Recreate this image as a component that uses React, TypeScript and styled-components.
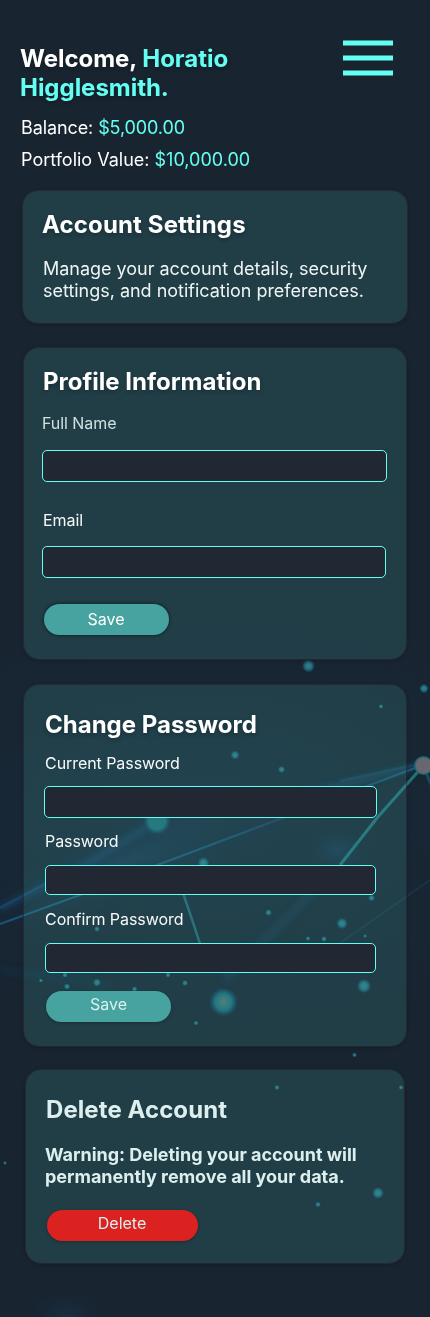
import React from 'react';
import styled, { createGlobalStyle } from 'styled-components';

const GlobalStyle = createGlobalStyle`
  *, *::before, *::after { box-sizing: border-box; }
  body { margin: 0; background: #182430; }
`;

const Page = styled.main`
  position: relative;
  width: 430px;
  height: 1317px;
  overflow: hidden;
  background: #182430;
  color: #fff;
  font-family: Inter, 'Liberation Sans', sans-serif;
`;

const Backdrop = styled.svg`
  position: absolute;
  inset: 0;
  pointer-events: none;
`;

const Content = styled.div`
  position: relative;
  display: flex;
  flex-direction: column;
`;

const Header = styled.header`
  display: flex;
  justify-content: space-between;
  align-items: flex-start;
  height: 191px;
  padding: 40px 37px 0 20px;
`;

const Greeting = styled.div`
  width: 260px;
  padding-top: 4px;
`;

const Welcome = styled.h1`
  margin: 0 0 15px;
  font-size: 24px;
  font-weight: 700;
  line-height: 29px;
  letter-spacing: -0.03px;
  text-shadow: 0 2px 4px rgba(0, 0, 0, 0.25);
`;

const Accent = styled.span`
  color: #64fff3;
`;

const Stat = styled.p<{ $tracking?: number }>`
  margin: 0 0 10px 1px;
  font-size: 18px;
  font-weight: 400;
  line-height: 22px;
  letter-spacing: ${(p) => p.$tracking ?? 0}px;
`;

const MenuButton = styled.button`
  display: block;
  padding: 0;
  border: 0;
  background: none;
`;

const Card = styled.section<{ $left: number; $width: number; $height: number; $gap?: number; $top: number }>`
  display: flex;
  flex-direction: column;
  align-items: flex-start;
  width: ${(p) => p.$width}px;
  height: ${(p) => p.$height}px;
  margin: ${(p) => p.$gap ?? 0}px 0 0 ${(p) => p.$left}px;
  padding-top: ${(p) => p.$top}px;
  border-radius: 15px;
  background: rgba(70, 163, 160, 0.2);
  box-shadow: 0 0 0 1px rgba(47, 46, 58, 0.6), 0 1px 4px rgba(0, 0, 0, 0.3);
`;

const Title = styled.h2<{ $indent: number; $soft?: boolean; $tracking?: number }>`
  margin: 0 0 0 ${(p) => p.$indent}px;
  font-size: 24px;
  font-weight: 700;
  line-height: 29px;
  letter-spacing: ${(p) => p.$tracking ?? 0}px;
  color: ${(p) => (p.$soft ? '#dcefee' : '#fff')};
  text-shadow: ${(p) => (p.$soft ? 'none' : '0 2px 4px rgba(0, 0, 0, 0.25)')};
`;

const Copy = styled.p<{ $indent: number; $strong?: boolean }>`
  width: 335px;
  margin: ${(p) => (p.$strong ? 20 : 19)}px 0 0 ${(p) => p.$indent}px;
  font-size: 18px;
  font-weight: ${(p) => (p.$strong ? 700 : 400)};
  line-height: 22px;
  letter-spacing: -0.02px;
  color: ${(p) => (p.$strong ? '#dcefee' : '#eff5f5')};
`;

const Label = styled.label<{ $indent: number; $gap: number; $soft?: boolean }>`
  margin: ${(p) => p.$gap}px 0 0 ${(p) => p.$indent}px;
  font-size: 16px;
  font-weight: 400;
  line-height: 19px;
  letter-spacing: -0.06px;
  color: ${(p) => (p.$soft ? '#cfe0e1' : '#f7fafa')};
`;

const Input = styled.input<{ $indent: number; $width: number; $height: number; $gap: number }>`
  flex: none;
  width: ${(p) => p.$width}px;
  height: ${(p) => p.$height}px;
  margin: ${(p) => p.$gap}px 0 0 ${(p) => p.$indent}px;
  padding: 0 10px;
  border: 1px solid #64fff3;
  border-radius: 5px;
  outline: 0;
  background: #222833;
  color: #fff;
  font: 400 16px Inter, sans-serif;
`;

const Button = styled.button<{ $indent: number; $gap: number; $textTop: number; $danger?: boolean; $soft?: boolean }>`
  flex: none;
  width: ${(p) => (p.$danger ? 151 : 125)}px;
  height: 31px;
  margin: ${(p) => p.$gap}px 0 0 ${(p) => p.$indent}px;
  padding: ${(p) => p.$textTop}px ${(p) => (p.$soft && !p.$danger ? 0 : 1)}px 0 0;
  display: flex;
  justify-content: center;
  align-items: flex-start;
  border: 0;
  border-radius: 16px;
  background: ${(p) => (p.$danger ? '#dc2121' : '#46a3a0')};
  color: ${(p) => (p.$soft ? '#daf0ef' : '#fff')};
  box-shadow: ${(p) => (p.$soft ? '0 1px 3px rgba(0, 0, 0, 0.25)' : '0 0 3px 1px rgba(20, 24, 34, 0.65)')};
  font-family: inherit;
  font-size: 16px;
  font-weight: 400;
  line-height: 19px;
`;

const dots: Array<[number, number, number]> = [
  [308.5, 666, 5.5], [424, 688.5, 4], [381, 706.5, 2], [235, 755, 3.8], [281.5, 769.5, 3],
  [203.5, 863, 5], [268.5, 912.5, 2.8], [371.5, 898, 2.8], [342, 923.5, 4.8], [308, 938.5, 2],
  [324, 939, 2.4], [365, 936, 1.6], [97, 929, 2.4], [41, 980.5, 1.8], [65, 975, 2.3],
  [67, 986.5, 2.6], [97, 982.5, 3.4], [134.5, 989, 2.3], [168, 975, 2.2], [185, 983, 2.5],
  [196, 1023, 2], [364, 986, 6], [354.5, 1055, 2], [277, 1087.5, 2.2], [401, 1087.5, 2],
  [5, 1163, 1.6], [378, 1193, 5], [318, 1204.5, 2.4],
];

const Network = () => (
  <Backdrop width="430" height="1317" viewBox="0 0 430 1317" aria-hidden="true">
    <defs>
      <radialGradient id="dot">
        <stop offset="0" stopColor="#388084" />
        <stop offset="0.5" stopColor="#22707e" />
        <stop offset="0.8" stopColor="#185974" stopOpacity="0.6" />
        <stop offset="1" stopColor="#164766" stopOpacity="0" />
      </radialGradient>
      <radialGradient id="bright">
        <stop offset="0" stopColor="#1f7077" />
        <stop offset="0.6" stopColor="#1f7077" />
        <stop offset="0.8" stopColor="#185974" stopOpacity="0.6" />
        <stop offset="1" stopColor="#164766" stopOpacity="0" />
      </radialGradient>
      <radialGradient id="node">
        <stop offset="0" stopColor="#7b6767" />
        <stop offset="0.2" stopColor="#3b7677" />
        <stop offset="0.58" stopColor="#1c6b76" />
        <stop offset="0.74" stopColor="#175675" stopOpacity="0.75" />
        <stop offset="1" stopColor="#174765" stopOpacity="0" />
      </radialGradient>
      <radialGradient id="haze">
        <stop offset="0" stopColor="#1a4665" stopOpacity="0.5" />
        <stop offset="1" stopColor="#18304a" stopOpacity="0" />
      </radialGradient>
      <linearGradient id="ray" x1="0" x2="1">
        <stop offset="0" stopColor="#1c5888" stopOpacity="0.85" />
        <stop offset="0.2" stopColor="#20657f" stopOpacity="0.8" />
        <stop offset="0.5" stopColor="#1d5b80" stopOpacity="0.8" />
        <stop offset="0.65" stopColor="#1c5579" stopOpacity="0.5" />
        <stop offset="1" stopColor="#226a91" stopOpacity="0.7" />
      </linearGradient>
      <filter id="soft"><feGaussianBlur stdDeviation="0.7" /></filter>
      <filter id="softer" x="-20%" y="-40%" width="140%" height="180%"><feGaussianBlur stdDeviation="3" /></filter>
    </defs>
    <ellipse cx="200" cy="820" rx="420" ry="230" fill="url(#haze)" opacity="0.5" />
    <ellipse cx="338" cy="850" rx="34" ry="24" fill="url(#haze)" />
    <ellipse cx="120" cy="865" rx="150" ry="38" fill="url(#haze)" transform="rotate(-22 120 865)" />
    <ellipse cx="66" cy="1317" rx="38" ry="26" fill="url(#haze)" opacity="0.7" />
    <g fill="none" filter="url(#softer)">
      <path d="M0 909 L80 868 L157 821" stroke="#1b598c" strokeWidth="7" opacity="0.35" />
      <path d="M300 795 L423 765" stroke="#1b628c" strokeWidth="6" opacity="0.4" />
      <path d="M315 890 L225 980" stroke="#1a4d6a" strokeWidth="10" opacity="0.25" />
      <path d="M0 970 L110 985" stroke="#1a4d75" strokeWidth="6" opacity="0.2" />
    </g>
    <g fill="none" filter="url(#soft)">
      <path d="M0 908 L45 884" stroke="#1b598c" strokeWidth="3" opacity="0.4" />
      <path d="M0 924 L80 895 L160 864 L285 817 L423 765" stroke="url(#ray)" strokeWidth="2.3" />
      <path d="M340 781 L423 763" stroke="#1f6288" strokeWidth="3" opacity="0.25" />
      <path d="M423 766 L377 818 L340 865" stroke="#237a7e" strokeWidth="3" opacity="0.9" />
      <path d="M183 893 Q194 925 202 950" stroke="#23717e" strokeWidth="2.5" opacity="0.85" />
      <path d="M340 943 L430 880" stroke="#1d5066" strokeWidth="2" opacity="0.35" />
      <path d="M425 770 L434 792" stroke="#1d5878" strokeWidth="3" opacity="0.7" />
    </g>
    {dots.map(([x, y, r]) => (
      <circle key={`${x}-${y}`} cx={x} cy={y} r={r * 1.2} fill="url(#dot)" />
    ))}
    <circle cx="157" cy="821" r="14" fill="url(#bright)" />
    <circle cx="223.5" cy="1002" r="14.5" fill="url(#node)" />
    <circle cx="423.5" cy="765.5" r="9.5" fill="#1b6675" filter="url(#soft)" />
    <circle cx="423.5" cy="765.5" r="8" fill="#67666e" filter="url(#soft)" />
  </Backdrop>
);

export default function App() {
  return (
    <>
      <GlobalStyle />
      <Page>
        <Network />
        <Content>
          <Header>
            <Greeting>
              <Welcome>
                Welcome, <Accent>Horatio</Accent>
                <br />
                <Accent>Higglesmith.</Accent>
              </Welcome>
              <Stat $tracking={-0.1}>Balance: <Accent>$5,000.00</Accent></Stat>
              <Stat>Portfolio Value: <Accent>$10,000.00</Accent></Stat>
            </Greeting>
            <MenuButton aria-label="Menu">
              <svg width="50" height="36" viewBox="0 0 50 36" display="block">
                <path d="M0 3h50M0 18h50M0 33h50" stroke="#64fff3" strokeWidth="5" />
              </svg>
            </MenuButton>
          </Header>

          <Card $left={23} $width={384} $height={132} $top={19}>
            <Title $indent={19} $tracking={0.14}>Account Settings</Title>
            <Copy $indent={20}>Manage your account details, security settings, and notification preferences.</Copy>
          </Card>

          <Card $left={24} $width={382} $height={311} $gap={25} $top={19}>
            <Title $indent={19}>Profile Information</Title>
            <Label htmlFor="name" $indent={18} $gap={18} $soft>Full Name</Label>
            <Input id="name" $indent={18} $width={345} $height={32} $gap={17} />
            <Label htmlFor="email" $indent={19} $gap={29}>Email</Label>
            <Input id="email" $indent={18} $width={344} $height={32} $gap={16} />
            <Button $indent={20} $gap={26} $textTop={6}>Save</Button>
          </Card>

          <Card $left={24} $width={382} $height={361} $gap={26} $top={25}>
            <Title $indent={21}>Change Password</Title>
            <Label htmlFor="current" $indent={21} $gap={15}>Current Password</Label>
            <Input id="current" type="password" $indent={20} $width={333} $height={32} $gap={13} />
            <Label htmlFor="password" $indent={21} $gap={14}>Password</Label>
            <Input id="password" type="password" $indent={21} $width={331} $height={30} $gap={14} />
            <Label htmlFor="confirm" $indent={21} $gap={15}>Confirm Password</Label>
            <Input id="confirm" type="password" $indent={21} $width={331} $height={30} $gap={14} />
            <Button $indent={22} $gap={18} $textTop={4} $soft>Save</Button>
          </Card>

          <Card $left={26} $width={378} $height={193} $gap={24} $top={25}>
            <Title $indent={20} $tracking={0.08} $soft>Delete Account</Title>
            <Copy $indent={19} $strong>Warning: Deleting your account will permanently remove all your data.</Copy>
            <Button $indent={21} $gap={22} $textTop={4} $danger $soft>Delete</Button>
          </Card>
        </Content>
      </Page>
    </>
  );
}
